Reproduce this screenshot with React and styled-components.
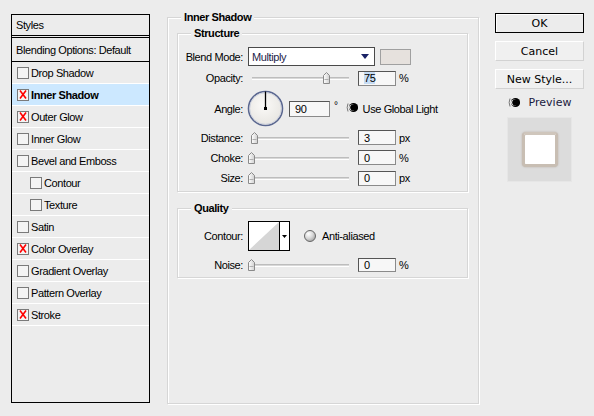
import React from 'react';
import styled, { createGlobalStyle } from 'styled-components';

const Global = createGlobalStyle`
  html, body { margin: 0; padding: 0; background: #ececec; }
  body {
    font-family: "Liberation Sans", Arial, sans-serif;
    font-size: 11px;
    letter-spacing: -0.4px;
    color: #000;
  }
`;

const Page = styled.div`
  width: 594px;
  height: 416px;
  box-sizing: border-box;
  padding-left: 11px;
  display: flex;
  align-items: flex-start;
  overflow: hidden;
  background: #ececec;
`;

/* ---------- left styles list ---------- */
const StylesPanel = styled.div`
  margin-top: 14px;
  width: 139px;
  height: 389px;
  box-sizing: border-box;
  border: 1px solid #000;
  display: flex;
  flex-direction: column;
`;

const PanelHeader = styled.div`
  height: 20px;
  border-bottom: 3px double #000;
  display: flex;
  align-items: center;
  padding-left: 4px;
`;

const BlendRow = styled.div`
  height: 23px;
  border-bottom: 1px solid #000;
  display: flex;
  align-items: center;
  padding-left: 4px;
`;

const EffectRow = styled.div`
  height: 21px;
  border-bottom: 1px solid #fff;
  display: flex;
  align-items: center;
  padding-left: ${p => (p.$indent ? 18 : 5)}px;
  background: ${p => (p.$selected ? '#cce8ff' : 'transparent')};
  font-weight: ${p => (p.$selected ? 'bold' : 'normal')};
`;

const CheckBox = styled.span`
  width: 12px;
  height: 12px;
  box-sizing: border-box;
  border: 1px solid #7a7a7a;
  background: #f4f4f4;
  margin-right: 2px;
  display: flex;
  align-items: center;
  justify-content: center;
  flex-shrink: 0;
`;

const RedX = () => (
  <svg width="8" height="9" viewBox="0 0 8 9">
    <path d="M1 0.5 L7 8.5 M7 0.5 L1 8.5" stroke="#ff0000" strokeWidth="1.6" fill="none" />
  </svg>
);

/* ---------- centre groups ---------- */
const MainGroup = styled.fieldset`
  margin: 11px 0 0 17px;
  width: 312px;
  height: 393px;
  min-width: 0;
  box-sizing: border-box;
  padding: 0 10px 0 9px;
  border: 1px solid #d6d6d6;
  box-shadow: inset 1px 1px 0 #fff, 1px 1px 0 #fff;
`;

const SubGroup = styled.fieldset`
  margin: ${p => p.$top}px 0 0 0;
  min-width: 0;
  padding: ${p => p.$padTop}px 0 2px 0;
  border: 1px solid #d6d6d6;
  box-shadow: inset 1px 1px 0 #fff, 1px 1px 0 #fff;
  display: flex;
  flex-direction: column;
  gap: ${p => p.$gap || 0}px;
`;

const Legend = styled.legend`
  font-weight: bold;
  line-height: 13px;
  padding: 0 3px;
  margin-left: ${p => p.$ml}px;
  background: #ececec;
`;

const Row = styled.div`
  height: ${p => p.$h}px;
  display: flex;
  align-items: center;
`;

const Label = styled.span`
  width: 65px;
  flex-shrink: 0;
  text-align: right;
  margin-right: 5px;
`;

const Select = styled.div`
  width: 127px;
  height: 19px;
  box-sizing: border-box;
  border: 1px solid #4a4a4a;
  background: #fff;
  display: flex;
  align-items: center;
  justify-content: space-between;
  padding: 0 5px 0 3px;
  color: #1c1c48;
`;

const Swatch = styled.span`
  width: 31px;
  height: 16px;
  box-sizing: border-box;
  margin-left: 5px;
  border: 1px solid #a0a0a0;
  background: #e6e1dd;
`;

const SliderWrap = styled.div`
  position: relative;
  width: 102px;
  height: 14px;
  flex-shrink: 0;
`;

const Track = styled.div`
  position: absolute;
  left: 4px;
  right: 1px;
  top: 6px;
  height: 1px;
  border-top: 1px solid #bdbdbd;
  border-bottom: 1px solid #fff;
  background: #d8d8d8;
`;

const Thumb = styled.svg`
  position: absolute;
  top: 1px;
  left: ${p => p.$pos}px;
`;

const Slider = ({ pos }) => (
  <SliderWrap>
    <Track />
    <Thumb $pos={pos} width="7" height="12" viewBox="0 0 7 12">
      <defs>
        <linearGradient id="tg" x1="0" y1="0" x2="1" y2="0">
          <stop offset="0" stopColor="#fff" />
          <stop offset="1" stopColor="#d0d0d0" />
        </linearGradient>
      </defs>
      <path d="M3.5 0.5 L6.5 3.5 V11.5 H0.5 V3.5 Z" fill="url(#tg)" stroke="#8a8a8a" />
      <path d="M1.5 7.5 H5.5" stroke="#b0b0b0" />
    </Thumb>
  </SliderWrap>
);

const Field = styled.div`
  width: ${p => p.$w || 38}px;
  height: ${p => p.$h || 15}px;
  margin-left: ${p => (p.$ml == null ? 8 : p.$ml)}px;
  box-sizing: border-box;
  border: 1px solid #555;
  border-right-color: #8a8a8a;
  border-bottom-color: #8a8a8a;
  background: #f7f7f7;
  padding-left: 5px;
  display: flex;
  align-items: center;
  flex-shrink: 0;
`;

const Selected = styled.span`
  background: #c6dcf4;
`;

const Unit = styled.span`
  margin-left: 3px;
`;

const Degree = styled.span`
  margin-left: 4px;
  align-self: flex-start;
  margin-top: 10px;
  font-size: 10px;
`;

const CheckLabel = styled.span`
  margin-left: ${p => p.$ml}px;
`;

const Dial = () => (
  <svg width="37" height="37" viewBox="0 0 37 37" style={{ flexShrink: 0, marginLeft: -1 }}>
    <defs>
      <radialGradient id="dg" cx="0.45" cy="0.4" r="0.6">
        <stop offset="0" stopColor="#fbfaf8" />
        <stop offset="1" stopColor="#e8e6e2" />
      </radialGradient>
    </defs>
    <circle cx="18.5" cy="18.5" r="17" fill="url(#dg)" stroke="#5a6790" strokeWidth="1.6" />
    <circle cx="18.5" cy="18.5" r="15.8" fill="none" stroke="#c9cedc" strokeWidth="0.8" />
    <path d="M18.5 18.5 V1.5" stroke="#000" strokeWidth="1.3" />
    <rect x="17" y="17" width="3" height="3" fill="#000" />
  </svg>
);

const GlobalLightIcon = () => (
  <svg width="12" height="11" viewBox="0 0 12 11" style={{ flexShrink: 0 }}>
    <path d="M2 1.5 Q0.3 5.5 2 9.5" stroke="#777" strokeWidth="1" fill="none" />
    <circle cx="7.5" cy="5.5" r="4.6" fill="#000" />
    <circle cx="6.2" cy="5.5" r="3.1" fill="#f4f4f4" />
    <circle cx="7.3" cy="5.5" r="3.1" fill="#000" />
  </svg>
);

const ContourBox = styled.div`
  width: 42px;
  height: 30px;
  box-sizing: border-box;
  border: 1px solid #000;
  background: #fff;
  display: flex;
  flex-shrink: 0;
`;

const ContourGraph = styled.div`
  flex: 1;
  display: flex;
`;

const ContourDrop = styled.div`
  width: 10px;
  border-left: 1px solid #000;
  display: flex;
  align-items: center;
  justify-content: center;
`;

const Radio = styled.span`
  width: 12px;
  height: 12px;
  box-sizing: border-box;
  border-radius: 50%;
  margin-left: 14px;
  border: 1px solid #666;
  background: radial-gradient(circle at 35% 30%, #ffffff 0%, #d8d8d8 45%, #8c8c8c 100%);
  flex-shrink: 0;
`;

/* ---------- right column ---------- */
const RightCol = styled.div`
  margin: 13px 0 0 16px;
  width: 89px;
  display: flex;
  flex-direction: column;
  align-items: center;
`;

const Button = styled.button`
  width: 89px;
  height: 20px;
  margin: 0 0 8px 0;
  padding: 0;
  box-sizing: border-box;
  font-family: "DejaVu Sans", Verdana, sans-serif;
  font-size: 11px;
  letter-spacing: 0;
  color: #000;
  background: ${p => (p.$default ? '#ececec' : '#f0f0f0')};
  border: 1px solid;
  border-color: ${p => (p.$default ? '#000' : '#fff #d2d2d2 #d2d2d2 #fff')};
  box-shadow: ${p => (p.$default ? 'inset 1px 1px 0 #fff' : 'none')};
`;

const PreviewRow = styled.div`
  margin-top: -3px;
  height: 16px;
  display: flex;
  align-items: center;
  gap: 9px;
  font-family: "DejaVu Sans", Verdana, sans-serif;
  font-size: 11px;
  letter-spacing: 0;
  color: #1a1a40;
`;

const PreviewBox = styled.div`
  margin-top: 7px;
  width: 65px;
  height: 65px;
  box-sizing: border-box;
  background: #dcdcdc;
  border: 1px solid #e6e6e6;
  display: flex;
  align-items: center;
  justify-content: center;
`;

const PreviewSwatch = styled.div`
  width: 36px;
  height: 35px;
  box-sizing: border-box;
  background: #fff;
  border: 3px solid #c8beb3;
  border-top-color: #cfc6bc;
  border-radius: 4px;
  box-shadow: 0 0 2px #b7ada3;
`;

const effects = [
  { name: 'Drop Shadow' },
  { name: 'Inner Shadow', checked: true, selected: true },
  { name: 'Outer Glow', checked: true },
  { name: 'Inner Glow' },
  { name: 'Bevel and Emboss' },
  { name: 'Contour', indent: true },
  { name: 'Texture', indent: true },
  { name: 'Satin' },
  { name: 'Color Overlay', checked: true },
  { name: 'Gradient Overlay' },
  { name: 'Pattern Overlay' },
  { name: 'Stroke', checked: true },
];

export default function App() {
  return (
    <Page>
      <Global />
      <StylesPanel>
        <PanelHeader>Styles</PanelHeader>
        <BlendRow>Blending Options: Default</BlendRow>
        {effects.map(e => (
          <EffectRow key={e.name} $indent={e.indent} $selected={e.selected}>
            <CheckBox>{e.checked && <RedX />}</CheckBox>
            {e.name}
          </EffectRow>
        ))}
      </StylesPanel>

      <MainGroup>
        <Legend $ml={4}>Inner Shadow</Legend>
        <SubGroup $top={3} $padTop={7}>
          <Legend $ml={13}>Structure</Legend>
          <Row $h={19}>
            <Label>Blend Mode:</Label>
            <Select>
              <span>Multiply</span>
              <svg width="8" height="5" viewBox="0 0 8 5">
                <path d="M0 0 H8 L4 5 Z" fill="#1a2266" />
              </svg>
            </Select>
            <Swatch />
          </Row>
          <Row $h={24}>
            <Label>Opacity:</Label>
            <Slider pos={75} />
            <Field><Selected>75</Selected></Field>
            <Unit>%</Unit>
          </Row>
          <Row $h={37}>
            <Label>Angle:</Label>
            <Dial />
            <Field $w={41} $h={16} $ml={5}>90</Field>
            <Degree>°</Degree>
            <CheckLabel $ml={8}><GlobalLightIcon /></CheckLabel>
            <CheckLabel $ml={5}>Use Global Light</CheckLabel>
          </Row>
          <Row $h={21}>
            <Label>Distance:</Label>
            <Slider pos={3} />
            <Field>3</Field>
            <Unit>px</Unit>
          </Row>
          <Row $h={19}>
            <Label>Choke:</Label>
            <Slider pos={0} />
            <Field>0</Field>
            <Unit>%</Unit>
          </Row>
          <Row $h={22}>
            <Label>Size:</Label>
            <Slider pos={0} />
            <Field>0</Field>
            <Unit>px</Unit>
          </Row>
        </SubGroup>

        <SubGroup $top={10} $padTop={6} $gap={3}>
          <Legend $ml={13}>Quality</Legend>
          <Row $h={30}>
            <Label>Contour:</Label>
            <ContourBox>
              <ContourGraph>
                <svg width="30" height="28" viewBox="0 0 30 28">
                  <polygon points="0,28 30,0 30,28" fill="#d6d6d6" />
                </svg>
              </ContourGraph>
              <ContourDrop>
                <svg width="5" height="3" viewBox="0 0 5 3">
                  <path d="M0 0 H5 L2.5 3 Z" fill="#000" />
                </svg>
              </ContourDrop>
            </ContourBox>
            <Radio />
            <CheckLabel $ml={6}>Anti-aliased</CheckLabel>
          </Row>
          <Row $h={21}>
            <Label>Noise:</Label>
            <Slider pos={0} />
            <Field $h={14}>0</Field>
            <Unit>%</Unit>
          </Row>
        </SubGroup>
      </MainGroup>

      <RightCol>
        <Button $default>OK</Button>
        <Button>Cancel</Button>
        <Button>New Style...</Button>
        <PreviewRow>
          <GlobalLightIcon />
          <span>Preview</span>
        </PreviewRow>
        <PreviewBox>
          <PreviewSwatch />
        </PreviewBox>
      </RightCol>
    </Page>
  );
}
